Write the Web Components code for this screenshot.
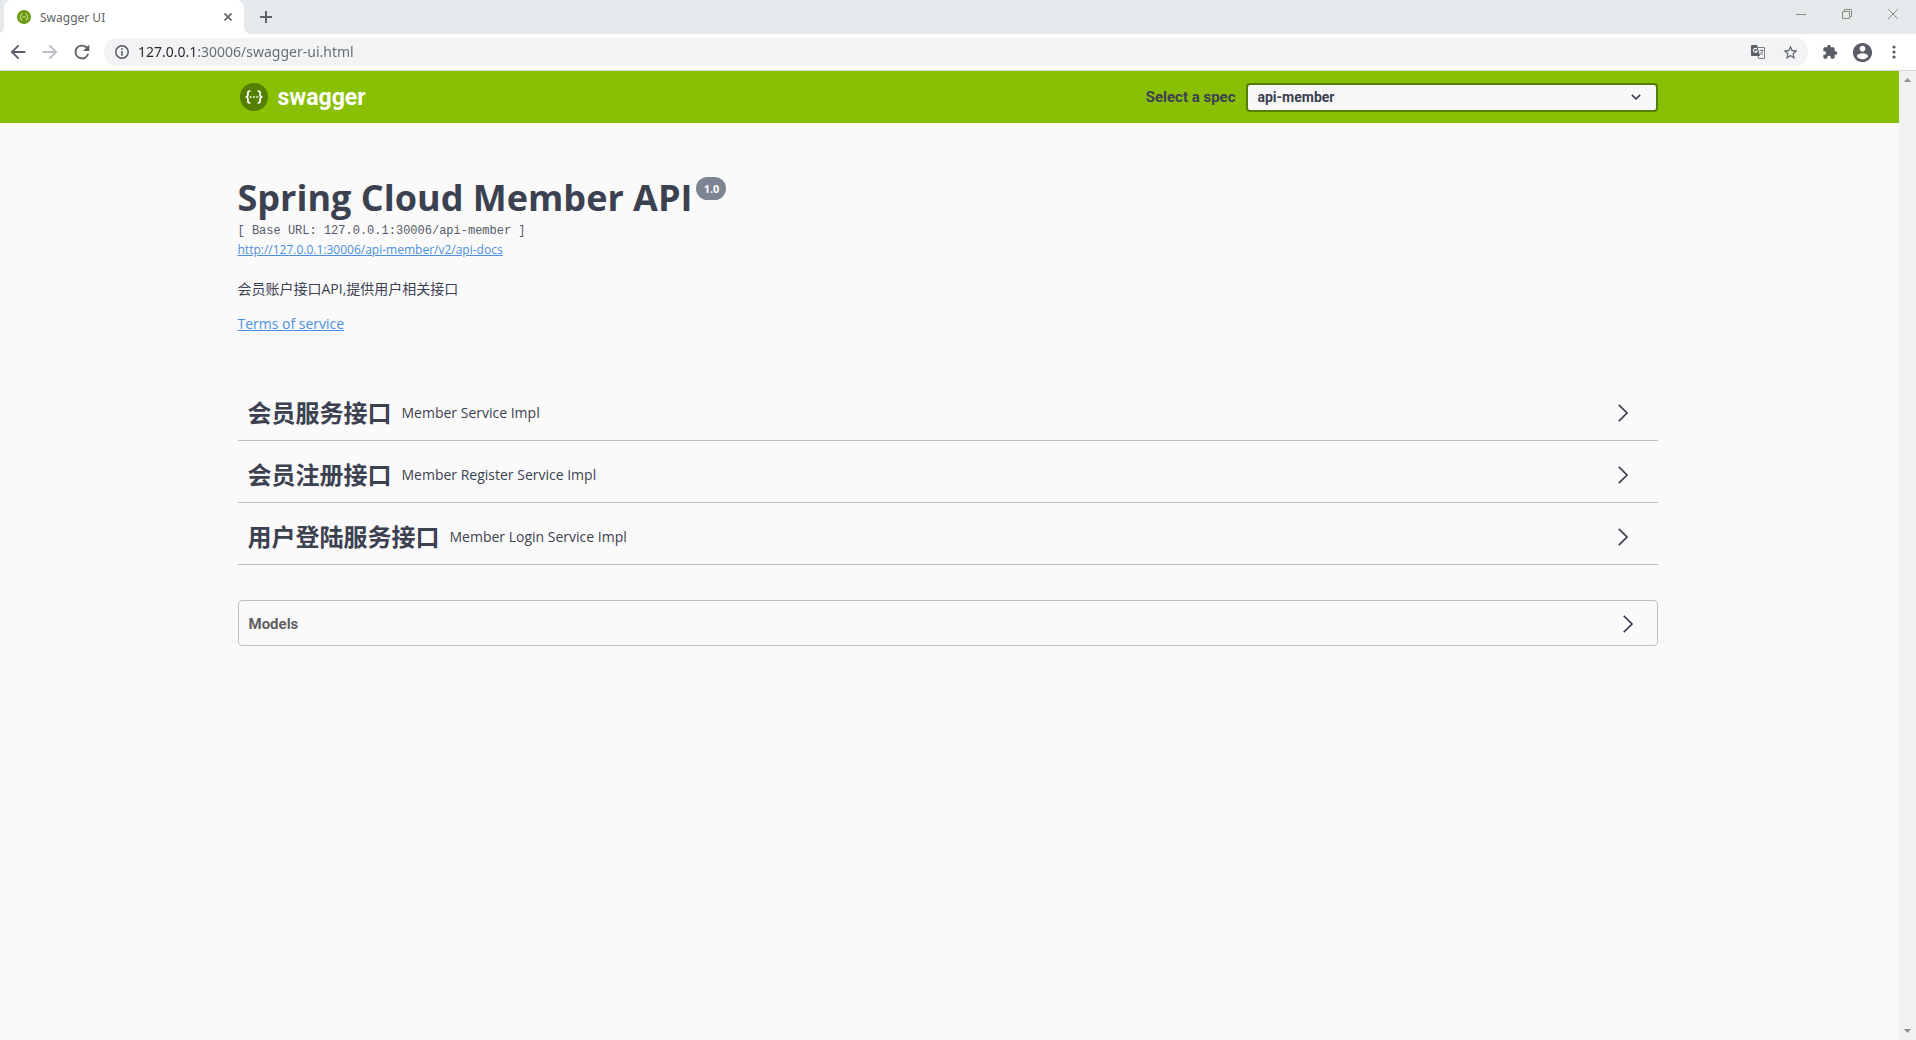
<!DOCTYPE html>
<html lang="en">
<head>
<meta charset="utf-8">
<title>Swagger UI</title>
<style>
html, body { margin: 0; height: 100%; }
body { font-family: "Open Sans", "Noto Sans CJK SC", sans-serif; color: #3b4151; background: #fafafa; }
</style>
</head>
<body>
<browser-window>
  <tab-strip slot="chrome" label="Swagger UI"></tab-strip>
  <nav-bar slot="chrome" url="127.0.0.1:30006/swagger-ui.html"></nav-bar>
  <swagger-topbar>
    <option>api-member</option>
  </swagger-topbar>
  <page-wrapper>
    <api-info version="1.0" base="127.0.0.1:30006/api-member" docs="http://127.0.0.1:30006/api-member/v2/api-docs">
      Spring Cloud Member API
      <span slot="description">会员账户接口API,提供用户相关接口</span>
      <span slot="terms">Terms of service</span>
    </api-info>
    <api-tag>会员服务接口<span slot="description">Member Service Impl</span></api-tag>
    <api-tag>会员注册接口<span slot="description">Member Register Service Impl</span></api-tag>
    <api-tag>用户登陆服务接口<span slot="description">Member Login Service Impl</span></api-tag>
    <api-models>Models</api-models>
  </page-wrapper>
</browser-window>

<script>
function define(name, build) {
  customElements.define(name, class extends HTMLElement {
    constructor() {
      super();
      this.attachShadow({ mode: "open" });
    }
    connectedCallback() {
      this.shadowRoot.innerHTML = "<style>*{box-sizing:border-box}button{font:inherit;color:inherit;border:0;background:none;padding:0;margin:0;cursor:pointer}svg{display:block;flex:none}</style>" + build(this);
    }
  });
}

define("browser-window", () => `
<style>
:host { display: flex; flex-direction: column; height: 100vh; }
.view { flex: 1; display: flex; min-height: 0; border-top: 1px solid #d5d8dc; }
.page { flex: 1; min-width: 0; overflow: hidden; background: #fafafa; }
.scroll { width: 17px; background: #f1f1f1; display: flex; flex-direction: column; justify-content: space-between; align-items: center; padding: 7px 0; }
</style>
<slot name="chrome"></slot>
<div class="view">
  <main class="page"><slot></slot></main>
  <div class="scroll">
    <svg width="7" height="4" fill="#8b8f8b"><path d="M0 4 3.5 0 7 4z"/></svg>
    <svg width="7" height="4" fill="#8b8f8b"><path d="M0 0h7L3.500 4z"/></svg>
  </div>
</div>`);

define("tab-strip", el => `
<style>
:host { display: flex; height: 34px; background: #e5e9ec; padding-left: 4px; color: #5f6368; flex: none; }
.tab { position: relative; width: 240px; background: #fff; border-radius: 8px 8px 0 0; display: flex; align-items: center; padding: 0 11px 0 13px; gap: 9px; }
.tab::before, .tab::after { content: ""; position: absolute; bottom: 0; width: 8px; height: 8px; }
.tab::before { left: -8px; background: radial-gradient(circle at 0 0, transparent 8px, #fff 8px); }
.tab::after { right: -8px; background: radial-gradient(circle at 100% 0, transparent 8px, #fff 8px); }
.name { flex: 1; font: 12px/18px "Noto Sans", sans-serif; padding-top: 2px; }
.close { display: flex; width: 10px; justify-content: center; }
.add { width: 28px; margin-left: 8px; display: grid; place-items: center; }
.controls { margin-left: auto; display: flex; color: #87917f; padding-bottom: 6px; }
.controls button { width: 46px; display: grid; place-items: center; }
</style>
<div class="tab">
  <svg width="14" height="14" viewBox="0 0 14 14"><circle cx="7" cy="7" r="7" fill="#6a9a10"/><path d="M5 3.500c-1.500 0-.6 3-1.800 3.500 1.200.5.300 3.500 1.800 3.500M9 3.500c1.500 0 .6 3 1.800 3.500-1.200.5-.3 3.500-1.800 3.500M5.500 7h3" stroke="#d8e8b8" fill="none"/></svg>
  <span class="name">${el.getAttribute("label")}</span>
  <button class="close" aria-label="Close tab"><svg width="8" height="8" stroke="#5f6368" stroke-width="1.600"><path d="M.5.500l7 7M7.500.500l-7 7"/></svg></button>
</div>
<button class="add" aria-label="New tab"><svg width="12" height="12" stroke="#5f6368" stroke-width="2"><path d="M6 0v12M0 6h12"/></svg></button>
<div class="controls">
  <button aria-label="Minimize"><svg width="10" height="10" stroke="currentColor"><path d="M0 5.500h10"/></svg></button>
  <button aria-label="Restore"><svg width="10" height="10" stroke="currentColor" fill="none"><path d="M.5 2.500h7v7h-7zM2.500 2.500v-2h7v7h-2"/></svg></button>
  <button aria-label="Close"><svg width="10" height="10" stroke="currentColor"><path d="M0 0l10 10M10 0L0 10"/></svg></button>
</div>`);

define("nav-bar", el => `
<style>
:host { display: flex; align-items: center; height: 36px; background: #fff; padding: 0 6px 0 2px; color: #5a5c66; flex: none; }
button { width: 32px; height: 28px; display: grid; place-items: center; }
.box { flex: 1; height: 28px; border-radius: 14px; background: #f1f3f4; display: flex; align-items: center; margin: 0 6px; padding: 0 2px 0 11px; gap: 9px; }
.icons { display: flex; }
input { flex: 1; min-width: 0; border: 0; outline: 0; padding: 0; height: 24px; font: 14px/24px "Noto Sans", sans-serif; color: transparent; background: linear-gradient(90deg, #26282c 60px, #666a70 60px); -webkit-background-clip: text; background-clip: text; }
</style>
<button aria-label="Back"><svg width="22" height="22" viewBox="0 0 24 24" fill="currentColor"><path d="M20 11H7.830l5.590-5.590L12 4l-8 8 8 8 1.410-1.410L7.830 13H20v-2z"/></svg></button>
<button aria-label="Forward"><svg width="22" height="22" viewBox="0 0 24 24" fill="#babcc2"><path d="M12 4l-1.410 1.410L16.170 11H4v2h12.170l-5.580 5.590L12 20l8-8z"/></svg></button>
<button aria-label="Reload"><svg width="22" height="22" viewBox="0 0 24 24" fill="currentColor"><path d="M17.650 6.350A7.958 7.958 0 0 0 12 4a8 8 0 1 0 7.730 10h-2.080A6 6 0 1 1 12 6c1.660 0 3.140.69 4.220 1.780L13 11h7V4l-2.350 2.350z"/></svg></button>
<div class="box">
  <svg width="14" height="14" viewBox="0 0 14 14"><circle cx="7" cy="7" r="6.200" fill="none" stroke="currentColor" stroke-width="1.500"/><path d="M7 3.200v1.600M7 6v4.800" stroke="currentColor" stroke-width="1.600"/></svg>
  <input aria-label="Address" value="${el.getAttribute("url")}">
  <div class="icons">
    <button aria-label="Translate this page"><svg width="14" height="14" viewBox="0 0 14 14"><path d="M5.500 2.500h8v11h-6z" fill="#f1f3f4" stroke="#7c7e86"/><path d="M1 0h5l3 11H1a1 1 0 0 1-1-1V1a1 1 0 0 1 1-1z" fill="#5a5c66"/><path d="M6 4.200A2 2 0 1 0 6.300 6H4.400" fill="none" stroke="#f1f3f4" stroke-width="1.100"/><path d="M8.500 5.500h4M10.500 4.500v1M11.800 5.500c-.4 2-1.500 3.300-2.600 4M9.500 7.500l2.500 2.500" fill="none" stroke="#7c7e86"/></svg></button>
    <button aria-label="Bookmark this page"><svg width="17" height="17" viewBox="0 0 24 24" fill="currentColor"><path d="M22 9.240l-7.190-.62L12 2 9.190 8.630 2 9.240l5.460 4.730L5.820 21 12 17.270 18.180 21l-1.630-7.030L22 9.240zM12 15.400l-3.760 2.270 1-4.280-3.320-2.880 4.380-.38L12 6.100l1.710 4.040 4.380.38-3.320 2.880 1 4.280L12 15.400z"/></svg></button>
  </div>
</div>
<button aria-label="Extensions"><svg width="16" height="16" viewBox="0 0 24 24" fill="currentColor"><path d="M20.500 11H19V7c0-1.100-.9-2-2-2h-4V3.500C13 2.120 11.880 1 10.500 1S8 2.120 8 3.500V5H4c-1.100 0-1.990.9-1.990 2v3.800H3.500c1.490 0 2.700 1.210 2.700 2.700s-1.210 2.700-2.700 2.700H2V20c0 1.100.9 2 2 2h3.800v-1.500c0-1.490 1.210-2.700 2.700-2.700 1.490 0 2.700 1.210 2.700 2.700V22H17c1.100 0 2-.9 2-2v-4h1.500c1.380 0 2.500-1.120 2.500-2.500S21.880 11 20.500 11z"/></svg></button>
<button aria-label="Profile"><svg width="23" height="23" viewBox="0 0 24 24" fill="currentColor"><path d="M12 2C6.480 2 2 6.480 2 12s4.480 10 10 10 10-4.480 10-10S17.520 2 12 2zm0 3c1.660 0 3 1.340 3 3s-1.340 3-3 3-3-1.340-3-3 1.340-3 3-3zm0 14.200c-2.500 0-4.710-1.280-6-3.220.03-1.990 4-3.080 6-3.080 1.990 0 5.970 1.090 6 3.080-1.290 1.940-3.500 3.220-6 3.220z"/></svg></button>
<button aria-label="Menu"><svg width="4" height="14" fill="currentColor"><circle cx="2" cy="2" r="1.600"/><circle cx="2" cy="7" r="1.600"/><circle cx="2" cy="12" r="1.600"/></svg></button>`);

define("swagger-topbar", el => `
<style>
:host { display: block; background: #89bf04; }
.inner { display: flex; align-items: center; justify-content: space-between; height: 52px; max-width: 1460px; margin: 0 auto; padding: 0 20px; }
.bar { padding-right: 4px; }
a { display: flex; align-items: center; gap: 10px; padding-left: 2px; color: #fff; text-decoration: none; font: 700 23px/36px Roboto, sans-serif; }
a span { padding-top: 2px; }
label { display: flex; align-items: center; gap: 10px; font: 700 15px/20px Roboto, sans-serif; }
.field { display: grid; align-items: center; }
.field > * { grid-area: 1 / 1; }
.field svg { justify-self: end; margin-right: 17px; pointer-events: none; }
select { appearance: none; width: 412px; height: 29px; border: 2px solid #547f00; border-radius: 4px; background: #f7f7f7; color: #3b4151; padding: 0 40px 0 10px; font: 700 14px/20px Roboto, sans-serif; }
</style>
<div class="bar"><div class="inner">
  <a href="#"><svg width="28" height="28" viewBox="0 0 28 28"><circle cx="14" cy="14" r="14" fill="#547f00"/><path d="M10.300 8.200H9.600Q7.900 8.200 7.900 10v1.800Q7.900 14 5.600 14 7.900 14 7.900 16.200V18q0 1.800 1.700 1.800h.7M17.700 8.200h.7q1.700 0 1.700 1.800v1.800q0 2.200 2.300 2.200-2.300 0-2.300 2.200V18q0 1.800-1.700 1.800h-.7" fill="none" stroke="#fff" stroke-width="1.700"/><path d="M9.800 13.200h1.800v1.600H9.800zM13.100 13.200h1.800v1.600h-1.800zM16.400 13.200h1.800v1.600h-1.800z" fill="#fff"/></svg><span>swagger</span></a>
  <label><span>Select a spec</span>
    <span class="field"><select>${el.innerHTML}</select>
    <svg width="10" height="6" fill="none" stroke="#3b4151" stroke-width="1.600"><path d="M.8.800 5 4.800 9.200.800"/></svg></span>
  </label>
</div></div>`);

define("page-wrapper", () => `
<style>
:host { display: block; padding-right: 4px; }
.wrap { max-width: 1460px; margin: 0 auto; padding: 0 20px; }
</style>
<div class="wrap"><slot></slot></div>`);

define("api-info", el => `
<style>
:host { display: block; padding: 50px 0; }
.head { display: flex; align-items: flex-start; gap: 4px; }
h1 { margin: 0; font-size: 36px; line-height: 49px; }
.version { margin-top: 4px; background: #7d8492; color: #fff; border-radius: 12px; width: 30px; line-height: 23px; text-align: center; font-size: 11px; font-weight: 700; }
pre { margin: 0; font: 12px/18px "Liberation Mono", monospace; color: #555b69; }
a { color: #4990e2; }
.docs { display: block; font-size: 12px; line-height: 20px; }
p { margin: 0; font-size: 14px; line-height: 20px; }
.text { margin: 19px 0 15px; }
</style>
<div class="head"><h1><slot></slot></h1><span class="version">${el.getAttribute("version")}</span></div>
<pre>[ Base URL: ${el.getAttribute("base")} ]</pre>
<a class="docs" href="#"><span>${el.getAttribute("docs")}</span></a>
<p class="text"><slot name="description"></slot></p>
<p><a href="#"><slot name="terms"></slot></a></p>`);

define("api-tag", () => `
<style>
:host { display: block; margin-bottom: 5px; border-bottom: 1px solid #bfc0c3; }
button { display: flex; align-items: center; width: 100%; height: 56px; padding: 1px 30px 0 10px; gap: 10px; text-align: left; color: #3b4151; }
h2 { margin: 0; font-size: 24px; line-height: 36px; }
.desc { flex: 1; font-size: 14px; line-height: 20px; }
</style>
<button aria-expanded="false"><h2><slot></slot></h2><span class="desc"><slot name="description"></slot></span>
<svg width="10" height="18" fill="none" stroke="#3b4151" stroke-width="1.700"><path d="M.8.800 9 9 .8 17.200"/></svg></button>`);

define("api-models", () => `
<style>
:host { display: block; margin-top: 35px; border: 1px solid #bfc0c3; border-radius: 4px; }
button { display: flex; align-items: center; justify-content: space-between; width: 100%; height: 44px; padding: 1px 24px 0 10px; color: #606060; font: 700 15px/20px Roboto, sans-serif; }
</style>
<button aria-expanded="false"><span><slot></slot></span>
<svg width="10" height="18" fill="none" stroke="#3b4151" stroke-width="1.700"><path d="M.8.800 9 9 .8 17.200"/></svg></button>`);
</script>
</body>
</html>
